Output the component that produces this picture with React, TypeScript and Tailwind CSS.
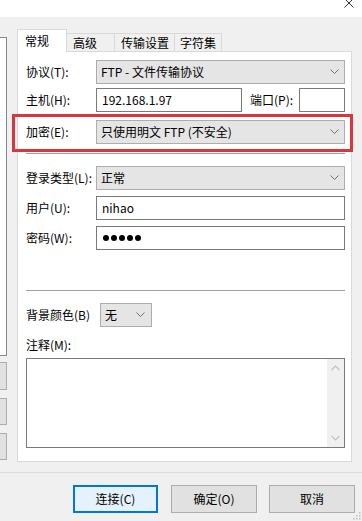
import React from 'react';

const font = { fontFamily: '"Noto Sans CJK SC", "Liberation Sans", sans-serif' };

const Chevron = () => (
    <svg width="9" height="6" viewBox="0 0 9 6" fill="none" stroke="#707070" strokeWidth="1">
        <path d="M0.5 0.5 L4.5 4.5 L8.5 0.5" />
    </svg>
);

const Select = ({ value, className = '' }: { value: string; className?: string }) => (
    <div className={`flex h-[24px] items-center justify-between border border-[#adadad] bg-[#e5e5e5] pl-[4px] pr-[5px] ${className}`}>
        <span className="text-[12px] leading-none text-black">{value}</span>
        <Chevron />
    </div>
);

const Input = ({ value, className = '' }: { value?: string; className?: string }) => (
    <div className={`flex h-[24px] items-center border border-[#7a7a7a] bg-white pl-[5px] ${className}`}>
        <span className="text-[12px] leading-none text-black">{value}</span>
    </div>
);

const Row = ({ label, children, className = '' }: { label: string; children: React.ReactNode; className?: string }) => (
    <div className={`flex items-center ${className}`}>
        <span className="w-[70px] shrink-0 text-[12px] leading-none text-black">{label}</span>
        {children}
    </div>
);

export default function App() {
    return (
        <div className="relative flex h-[521px] w-[362px] flex-col overflow-hidden bg-[#f0f0f0]" style={font}>
            {/* title bar */}
            <div className="flex h-[17px] justify-end bg-white pr-[8px]">
                <svg width="10" height="8" viewBox="0 0 10 8" stroke="#333" strokeWidth="1">
                    <path d="M0.5 -1.5 L9.5 7.5 M9.5 -1.5 L0.5 7.5" />
                </svg>
            </div>

            <div className="flex h-[445px]">
                {/* left site list, mostly cut off */}
                <div className="flex w-[7px] flex-col pt-[20px]">
                    <div className="h-[319px] border-y border-r border-[#828790] bg-white" />
                    <div className="mt-[6px] h-[28px] border-y border-r border-[#adadad] bg-[#e1e1e1]" />
                    <div className="mt-[8px] h-[27px] border-y border-r border-[#adadad] bg-[#e1e1e1]" />
                    <div className="mt-[8px] h-[27px] border-y border-r border-[#adadad] bg-[#e1e1e1]" />
                </div>

                <div className="ml-[10px] flex w-[335px] flex-col pt-[12px]">
                    {/* tabs */}
                    <div className="relative z-10 -mb-px flex h-[23px] items-end">
                        <div className="flex h-[23px] w-[50px] items-start border border-b-0 border-[#d9d9d9] bg-white pl-[7px] pt-[2px] text-[12px] text-black">常规</div>
                        <div className="flex h-[19px] w-[48px] items-center border border-l-0 border-[#d9d9d9] bg-[#f0f0f0] pl-[6px] text-[12px] text-black">高级</div>
                        <div className="flex h-[19px] w-[60px] items-center border border-l-0 border-[#d9d9d9] bg-[#f0f0f0] pl-[6px] text-[12px] text-black">传输设置</div>
                        <div className="flex h-[19px] w-[47px] items-center border border-l-0 border-[#d9d9d9] bg-[#f0f0f0] pl-[5px] text-[12px] text-black">字符集</div>
                    </div>

                    {/* panel */}
                    <div className="flex flex-1 flex-col border border-[#d9d9d9] bg-white pl-[8px] pr-[6px] pt-[8px]">
                        <Row label="协议(T):">
                            <Select value="FTP - 文件传输协议" className="flex-1" />
                        </Row>
                        <Row label="主机(H):" className="mt-[4px]">
                            <Input value="192.168.1.97" className="w-[146px]" />
                            <span className="ml-[8px] w-[49px] text-[12px] leading-none text-black">端口(P):</span>
                            <Input className="flex-1" />
                        </Row>
                        <Row label="加密(E):" className="mt-[8px]">
                            <Select value="只使用明文 FTP (不安全)" className="flex-1" />
                        </Row>
                        <div className="mt-[9px] h-px bg-[#a0a0a0]" />
                        <Row label="登录类型(L):" className="mt-[12px]">
                            <Select value="正常" className="flex-1" />
                        </Row>
                        <Row label="用户(U):" className="mt-[6px]">
                            <Input value="nihao" className="flex-1" />
                        </Row>
                        <Row label="密码(W):" className="mt-[6px]">
                            <div className="flex h-[24px] flex-1 items-center gap-[2px] border border-[#7a7a7a] bg-white pl-[6px]">
                                {[0, 1, 2, 3, 4].map((i) => (
                                    <span key={i} className="h-[6px] w-[6px] rounded-full bg-black" />
                                ))}
                            </div>
                        </Row>
                        <div className="mt-[40px] h-px bg-[#a0a0a0]" />
                        <div className="mt-[12px] flex items-center">
                            <span className="w-[74px] shrink-0 text-[12px] leading-none text-black">背景颜色(B)</span>
                            <div className="flex h-[24px] w-[52px] items-center justify-between border border-[#adadad] bg-[#e5e5e5] pl-[4px] pr-[6px]">
                                <span className="text-[12px] leading-none text-black">无</span>
                                <Chevron />
                            </div>
                        </div>
                        <span className="mt-[12px] text-[12px] leading-none text-black">注释(M):</span>
                        <div className="mt-[7px] flex h-[90px] border border-[#7a7a7a] bg-white">
                            <div className="flex-1" />
                            <div className="flex w-[17px] flex-col items-center justify-between bg-[#f0f0f0] py-[6px]">
                                <svg width="9" height="6" viewBox="0 0 9 6" fill="none" stroke="#c2c2c2" strokeWidth="1.2">
                                    <path d="M0.5 5 L4.5 1 L8.5 5" />
                                </svg>
                                <svg width="9" height="6" viewBox="0 0 9 6" fill="none" stroke="#c2c2c2" strokeWidth="1.2">
                                    <path d="M0.5 1 L4.5 5 L8.5 1" />
                                </svg>
                            </div>
                        </div>
                    </div>
                </div>
            </div>

            {/* bottom separator and buttons */}
            <div className="mt-[10px] h-px bg-[#dcdcdc]" />
            <div className="mt-[12px] flex pl-[73px]">
                <button className="h-[28px] w-[85px] border-2 border-[#0078d7] bg-[#e5f1fb] text-[12px] text-black">连接(C)</button>
                <button className="ml-[13px] h-[28px] w-[86px] border border-[#adadad] bg-[#e1e1e1] text-[12px] text-black">确定(O)</button>
                <button className="ml-[12px] h-[28px] w-[86px] border border-[#adadad] bg-[#e1e1e1] text-[12px] text-black">取消</button>
            </div>

            {/* red annotation box */}
            <div className="absolute left-[12px] top-[114px] h-[38px] w-[341px] border-[3px] border-[#d9363e]" />

            {/* size grip */}
            <svg className="absolute bottom-[1px] right-[1px]" width="8" height="8" viewBox="0 0 8 8" fill="#bcbcbc">
                <rect x="6" y="0" width="1.5" height="1.5" />
                <rect x="3" y="3" width="1.5" height="1.5" />
                <rect x="6" y="3" width="1.5" height="1.5" />
                <rect x="0" y="6" width="1.5" height="1.5" />
                <rect x="3" y="6" width="1.5" height="1.5" />
                <rect x="6" y="6" width="1.5" height="1.5" />
            </svg>
        </div>
    );
}
